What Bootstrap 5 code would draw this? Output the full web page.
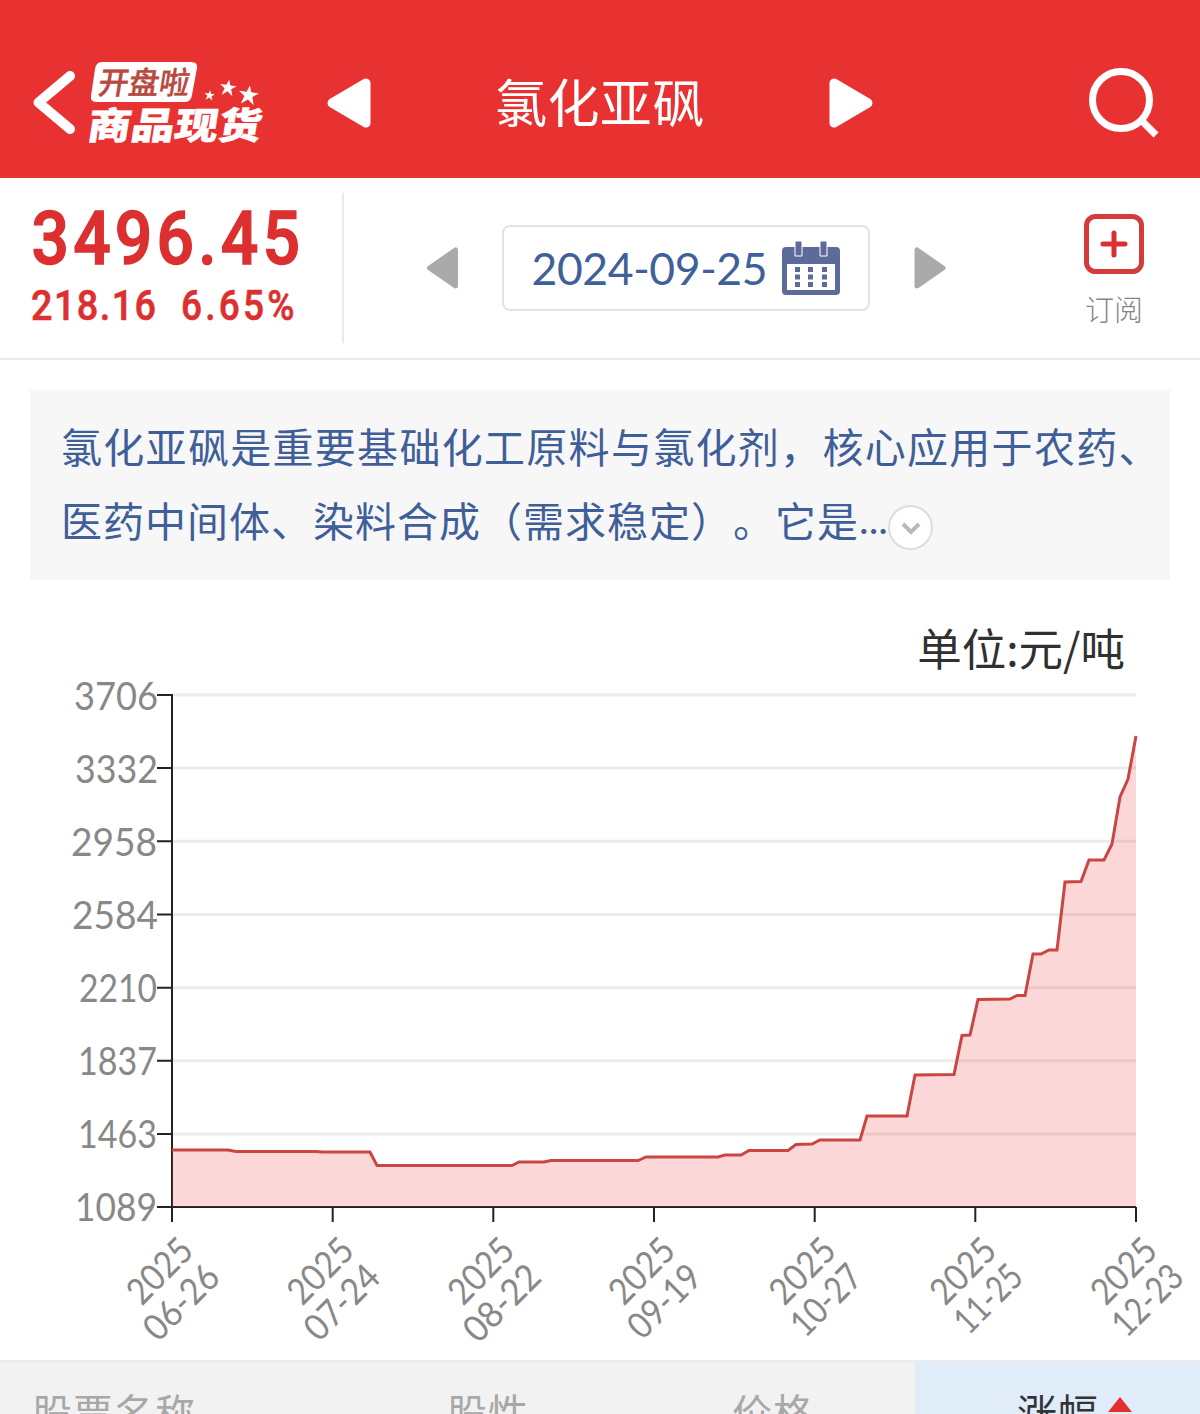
<!DOCTYPE html>
<html lang="zh-CN">
<head>
<meta charset="utf-8">
<meta name="viewport" content="width=device-width, initial-scale=1">
<title>氯化亚砜</title>
<link href="https://cdn.jsdelivr.net/npm/bootstrap@5.3.0/dist/css/bootstrap.min.css" rel="stylesheet">
<style>
body{font-family:"Noto Sans CJK SC",sans-serif;background:#fff;height:1414px;overflow:hidden}
svg{display:block;flex:none;overflow:visible}
svg text{font-family:Lato,"Noto Sans CJK SC",sans-serif}
.topbar{height:178px;background:#e83232;padding:28px 40px 0 24px}
.page-title{font-size:52px;line-height:60px;letter-spacing:.4px;width:210px;margin:-4px 123px 0 123px;font-weight:400;white-space:nowrap}
.quote-row{height:182px;border-bottom:2px solid #ebebeb}
.price-box{width:344px;height:150px;margin-top:15px;border-right:2px solid #ebebeb;color:#dc3030}
.price-box text{font-family:Roboto,sans-serif;font-weight:500;stroke:#dc3030}
.date-nav{width:520px;margin-left:82px}
.date-box{width:368px;height:86px;border:2px solid #e2e2e2;border-radius:8px;color:#40609a}
.subscribe{margin-right:56px;padding-top:36px}
.sub-label{font-size:29px;line-height:36px;color:#858585;font-weight:300}
.intro{margin:30px 30px 0;height:190px;padding:18px 0 0 31px;background:#f7f7f8;color:#405f99;font-size:41px;line-height:74px;letter-spacing:1.3px;white-space:nowrap;font-feature-settings:"chws" 0,"halt" 0,"palt" 0;text-spacing-trim:space-all}
.intro-end{letter-spacing:1px}
.dots{font-family:Lato,sans-serif;letter-spacing:0;width:29px}
.more-btn{width:45px;height:45px;border:2px solid #ddd;background:#fff;margin-top:23px}
.unit-label{height:72px;margin-top:32px;padding-right:75px;font-size:44.5px;line-height:70px;color:#303030;text-align:right}
.stock-head{height:54px;border-top:2px solid #ebebeb;background:#f2f2f2;color:#a8a8a8;font-size:40px;line-height:54px;overflow:hidden}
.stock-head>div{padding-top:22px;white-space:nowrap;letter-spacing:1px}
.c1{width:447px;padding-left:32px}.c2{width:285px}.c3{width:183px}
.sorted{width:285px;background:#e0ecf8;color:#303338;padding-left:102px}
</style>
<script src="https://cdn.jsdelivr.net/npm/bootstrap@5.3.0/dist/js/bootstrap.bundle.min.js"></script>
</head>
<body>
<header class="topbar d-flex align-items-center text-white">
  <svg width="246" height="100" viewBox="24 53 246 100">
    <path d="M70 76 38.500 102.500 70 129" fill="none" stroke="#fff" stroke-width="10" stroke-linecap="round" stroke-linejoin="round"/>
    <path d="M102 62H191Q198 62 197 68L192 95Q191 102 185 102H97Q90 102 91 96L95 69Q96 62 102 62Z" fill="#fff"/>
    <text transform="translate(97 93.500) skewX(-9)" font-size="31" font-weight="500" fill="#b9483f" stroke="#b9483f" stroke-width=".4" textLength="91" lengthAdjust="spacingAndGlyphs">开盘啦</text>
    <text transform="translate(86 139) skewX(-9)" font-size="37" font-weight="900" fill="#fff" stroke="#fff" stroke-width=".5" textLength="174" lengthAdjust="spacingAndGlyphs">商品现货</text>
    <g fill="#fff">
      <path id="star" transform="translate(248.500 95.500) rotate(8)" d="M0-10 2.400-3.500 10-3.500 4 1 6.500 9 0 4-6.500 9-4 1-10-3.500-2.400-3.500Z"/>
      <use href="#star" transform="translate(228 88) scale(.83) translate(-248.500 -95.500)"/>
      <use href="#star" transform="translate(209.500 95.500) scale(.52) translate(-248.500 -95.500)"/>
    </g>
  </svg>
  <svg style="margin-left:56px" width="46" height="52" viewBox="0 0 46 52"><path d="M6 26 40 6V46Z" fill="#fff" stroke="#fff" stroke-width="9" stroke-linejoin="round"/></svg>
  <h1 class="page-title">氯化亚砜</h1>
  <svg width="46" height="52" viewBox="0 0 46 52"><path d="M40 26 6 6V46Z" fill="#fff" stroke="#fff" stroke-width="9" stroke-linejoin="round"/></svg>
  <svg class="ms-auto" width="120" height="80" viewBox="1040 62 120 80" fill="none" stroke="#fff"><circle cx="1121" cy="99" r="28.500" stroke-width="7"/><path d="M1141 119 1156 134" stroke-width="7"/></svg>
</header>

<section class="quote-row d-flex">
  <div class="price-box">
    <svg width="320" height="150" viewBox="0 193 320 150" fill="#dc3030">
      <text transform="translate(31.500 264) scale(.88 1)" font-size="75" stroke-width="1.500" textLength="305">3496.45</text>
      <text transform="translate(31 320) scale(.9 1)" font-size="42" stroke-width=".6" textLength="139">218.16</text>
      <text transform="translate(181 320) scale(.88 1)" font-size="42" stroke-width=".6" textLength="129">6.65%</text>
    </svg>
  </div>
  <div class="date-nav d-flex align-items-center justify-content-between">
    <svg width="32" height="42" viewBox="0 0 32 42"><path d="M3.500 21 29.500 3V39Z" fill="#aaa" stroke="#aaa" stroke-width="5" stroke-linejoin="round"/></svg>
    <div class="date-box d-flex align-items-center">
      <svg width="364" height="82" viewBox="504 227 364 82">
        <text x="531.500" y="284.500" font-size="44.500" fill="#40609a" textLength="236">2024-09-25</text>
        <g fill="#5d6b9b">
          <path fill-rule="evenodd" d="M786 247H836Q840 247 840 251V291Q840 295 836 295H786Q782 295 782 291V251Q782 247 786 247ZM787 264V290H835V264Z"/>
          <path stroke="#fff" d="M795 241h7v15h-7zM820 241h7v15h-7z"/>
          <path d="M795 267h5v5h-5zm13 0h5v5h-5zm14 0h5v5h-5zM795 274.500h5v5h-5zm13 0h5v5h-5zm14 0h5v5h-5zM795 282h5v5h-5zm13 0h5v5h-5zm14 0h5v5h-5z"/>
        </g>
      </svg>
    </div>
    <svg width="32" height="42" viewBox="0 0 32 42"><path d="M29 21 3 3V39Z" fill="#aaa" stroke="#aaa" stroke-width="5" stroke-linejoin="round"/></svg>
  </div>
  <div class="subscribe d-flex flex-column align-items-center ms-auto">
    <svg width="60" height="60" viewBox="0 0 60 60" fill="none" stroke="#d43b3b"><rect x="2.500" y="2.500" width="55" height="55" rx="9" stroke-width="5"/><path d="M19 30H41M30 19V41" stroke="#dc3030" stroke-width="5" stroke-linecap="round"/></svg>
    <div class="sub-label mt-3">订阅</div>
  </div>
</section>

<section class="intro">
  <div>氯化亚砜是重要基础化工原料与氯化剂，核心应用于农药、</div>
  <div class="intro-end d-flex"><span>医药中间体、染料合成（需求稳定<span>）</span><span class="d-inline-block">。</span>它是</span><span class="dots">...</span>
    <span class="more-btn rounded-circle d-flex align-items-center justify-content-center"><svg width="22" height="16" viewBox="0 0 22 16"><path d="M3 4 11 12 19 4" fill="none" stroke="#b8b8b8" stroke-width="4"/></svg></span>
  </div>
</section>
<div class="unit-label">单位:元/吨</div>

<svg id="chart" width="1200" height="676" viewBox="0 684 1200 676" font-size="38" fill="#888">
  <path d="M172 695H1136M172 768H1136M172 841.300H1136M172 914.500H1136M172 987.700H1136M172 1060.800H1136M172 1134H1136" stroke="#ebebeb" stroke-width="3"/>
  <path d="M172 694V1222M157 695H172M157 768H172M157 841.300H172M157 914.500H172M157 987.700H172M157 1060.800H172M157 1134H172M157 1207H1136M332.700 1207V1222M493.300 1207V1222M654 1207V1222M814.700 1207V1222M975.300 1207V1222M1136 1207V1222" stroke="#222" stroke-width="2" fill="none"/>
  <path d="M172 1150H228L236 1151.500H316L322 1152H370L377 1165.500H512L519 1162H544L551 1160.500H638L646 1157H718L725 1155H741L749 1150.500H788L796 1144.500 812 1144 820 1140H860L867 1116H907L915 1075 954 1074.500 962 1035.500 970 1035 978 999.500 1010 999 1017 995.500H1025L1033 954H1041L1049 950H1057L1065 882 1081 881.500 1089 860H1104L1112 844 1120 797 1128 779 1136 736V1207H172Z" fill="#ee3535" fill-opacity=".2"/>
  <path d="M172 1150H228L236 1151.500H316L322 1152H370L377 1165.500H512L519 1162H544L551 1160.500H638L646 1157H718L725 1155H741L749 1150.500H788L796 1144.500 812 1144 820 1140H860L867 1116H907L915 1075 954 1074.500 962 1035.500 970 1035 978 999.500 1010 999 1017 995.500H1025L1033 954H1041L1049 950H1057L1065 882 1081 881.500 1089 860H1104L1112 844 1120 797 1128 779 1136 736" fill="none" stroke="#c94643" stroke-width="3"/>
  <g>
    <text x="74" y="709.500" textLength="84" lengthAdjust="spacingAndGlyphs">3706</text>
    <text x="75" y="782.500" textLength="83" lengthAdjust="spacingAndGlyphs">3332</text>
    <text x="71" y="855.500" textLength="86" lengthAdjust="spacingAndGlyphs">2958</text>
    <text x="72" y="928.500" textLength="86" lengthAdjust="spacingAndGlyphs">2584</text>
    <text x="79" y="1001.500" textLength="78" lengthAdjust="spacingAndGlyphs">2210</text>
    <text x="78" y="1074.500" textLength="79" lengthAdjust="spacingAndGlyphs">1837</text>
    <text x="78" y="1148" textLength="79" lengthAdjust="spacingAndGlyphs">1463</text>
    <text x="75" y="1221" textLength="82" lengthAdjust="spacingAndGlyphs">1089</text>
  </g>
  <g id="dates" font-size="36.500"></g>
</svg>

<div class="stock-head d-flex">
  <div class="c1">股票名称</div><div class="c2">股性</div><div class="c3">价格</div>
  <div class="sorted d-flex">涨幅<svg class="ms-2" width="26" height="50" viewBox="0 0 26 50"><path d="M13 13 25 28H1Z" fill="#e23030"/></svg></div>
</div>
<script>
// Date labels: two right-aligned lines turned 45 degrees below each tick
const widths={'06-26':90,'07-24':90,'08-22':92,'09-19':87,'10-27':84,'11-25':80,'12-23':84};
document.getElementById('dates').innerHTML=Object.keys(widths).map((d,i)=>{
  const x=172+i*160.667;
  return `<g transform="translate(${x+13.5} 1243) rotate(-45)"><text x="-76" y="14" textLength="76" lengthAdjust="spacingAndGlyphs">2025</text><text x="${-widths[d]}" y="51.500" textLength="${widths[d]}" lengthAdjust="spacingAndGlyphs">${d}</text></g>`;
}).join('');
</script>
</body>
</html>
